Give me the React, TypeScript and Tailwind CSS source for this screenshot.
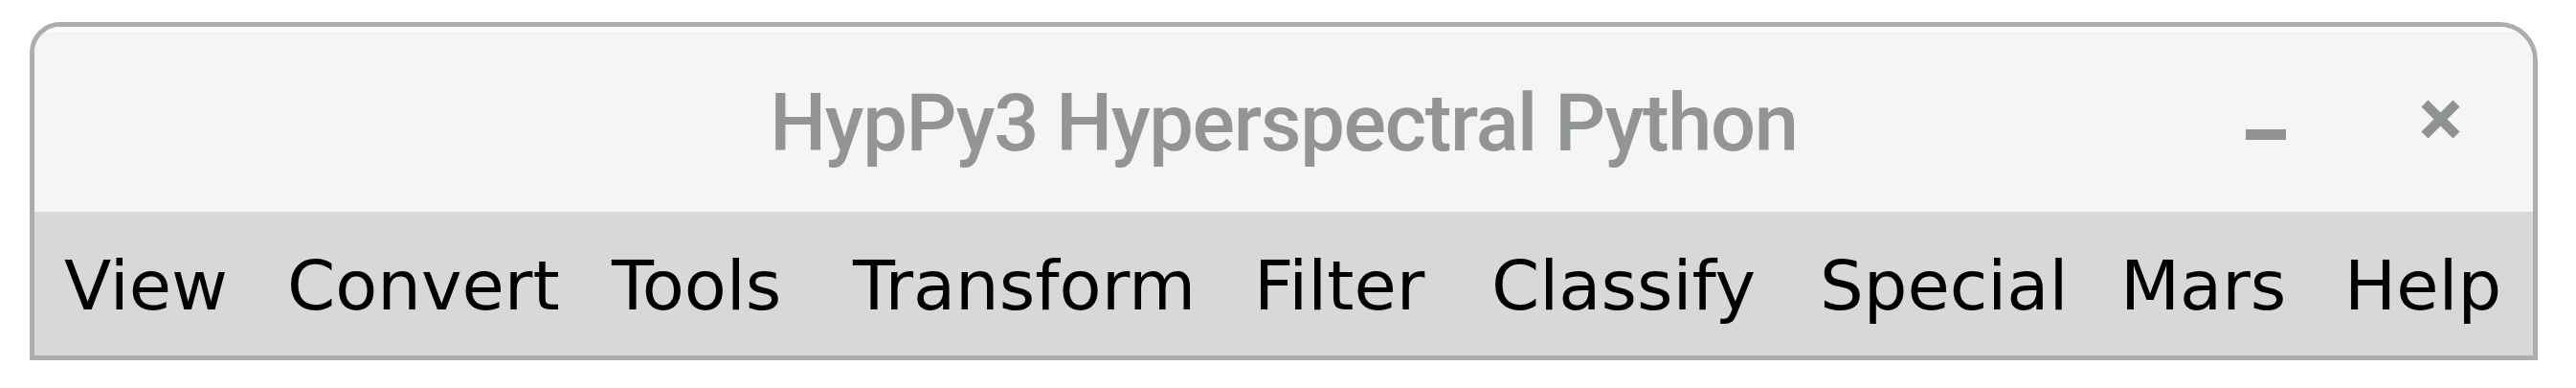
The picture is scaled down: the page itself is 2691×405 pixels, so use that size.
const menuItems = [
  { label: 'View', width: 'w-[233px]' },
  { label: 'Convert', width: 'w-[339px]' },
  { label: 'Tools', width: 'w-[252px]' },
  { label: 'Transform', width: 'w-[419px]' },
  { label: 'Filter', width: 'w-[248px]' },
  { label: 'Classify', width: 'w-[343px]' },
  { label: 'Special', width: 'w-[314px]' },
  { label: 'Mars', width: 'w-[234px]' },
  { label: 'Help', width: 'w-auto' },
];

function CloseIcon() {
  return (
    <svg width="43" height="43" viewBox="0 0 43 43" aria-hidden="true">
      <line x1="5" y1="5" x2="38" y2="38" stroke="#8e9292" strokeWidth="10" />
      <line x1="38" y1="5" x2="5" y2="38" stroke="#8e9292" strokeWidth="10" />
    </svg>
  );
}

export default function App() {
  return (
    <div className="min-h-screen bg-white pt-[23px] pl-[31px]">
      <div className="w-[2620px] border-[5px] border-[#adadad] rounded-tl-[32px] rounded-tr-[40px] overflow-hidden">
        {/* Title bar */}
        <div className="h-[193px] border-t-[5px] border-[#fdfdfd] bg-[#f6f5f4] grid grid-cols-[1fr_auto_1fr]">
          <div />
          <div
            className="pt-[54px] text-[83px] leading-[83px] font-medium tracking-[-1.3px] text-[#929595] whitespace-nowrap"
            style={{ fontFamily: 'Roboto, "Noto Sans", sans-serif' }}
          >
            HypPy3 Hyperspectral Python
          </div>
          <div className="flex justify-end items-start pt-[70px] pr-[75px]">
            <div className="mt-[32px] mr-[140px] w-[42px] h-[11px] bg-[#8f9393]" />
            <CloseIcon />
          </div>
        </div>

        <div className="h-[5px] bg-[#dcd8d5]" />

        {/* Menu bar */}
        <div
          className="flex bg-[#d8d8d8] pl-[31px] pt-[30px] pb-[31px] text-[72px] leading-[84px] text-black"
          style={{ fontFamily: '"DejaVu Sans", sans-serif' }}
        >
          {menuItems.map(item => (
            <div key={item.label} className={`${item.width} shrink-0 whitespace-nowrap`}>
              {item.label}
            </div>
          ))}
        </div>
      </div>
    </div>
  );
}
